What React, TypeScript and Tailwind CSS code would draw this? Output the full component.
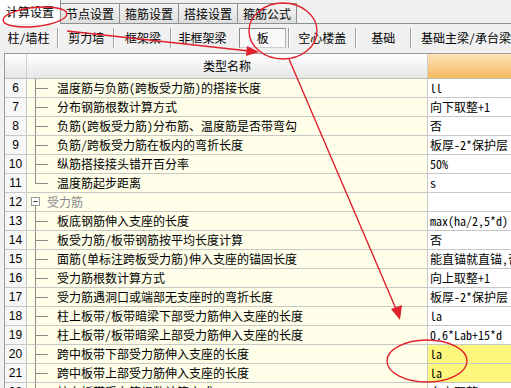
import React from 'react';

type Row = {
  n: number;
  name: string;
  value?: string;
  tree?: 'mid' | 'last' | 'group';
  hl?: boolean;
};

const rows: Row[] = [
  { n: 6, name: '温度筋与负筋(跨板受力筋)的搭接长度', value: 'll', tree: 'mid' },
  { n: 7, name: '分布钢筋根数计算方式', value: '向下取整+1', tree: 'mid' },
  { n: 8, name: '负筋(跨板受力筋)分布筋、温度筋是否带弯勾', value: '否', tree: 'mid' },
  { n: 9, name: '负筋/跨板受力筋在板内的弯折长度', value: '板厚-2*保护层', tree: 'mid' },
  { n: 10, name: '纵筋搭接接头错开百分率', value: '50%', tree: 'mid' },
  { n: 11, name: '温度筋起步距离', value: 's', tree: 'last' },
  { n: 12, name: '受力筋', tree: 'group' },
  { n: 13, name: '板底钢筋伸入支座的长度', value: 'max(ha/2,5*d)', tree: 'mid' },
  { n: 14, name: '板受力筋/板带钢筋按平均长度计算', value: '否', tree: 'mid' },
  { n: 15, name: '面筋(单标注跨板受力筋)伸入支座的锚固长度', value: '能直锚就直锚,否则按公式计算', tree: 'mid' },
  { n: 16, name: '受力筋根数计算方式', value: '向上取整+1', tree: 'mid' },
  { n: 17, name: '受力筋遇洞口或端部无支座时的弯折长度', value: '板厚-2*保护层', tree: 'mid' },
  { n: 18, name: '柱上板带/板带暗梁下部受力筋伸入支座的长度', value: 'la', tree: 'mid' },
  { n: 19, name: '柱上板带/板带暗梁上部受力筋伸入支座的长度', value: '0.6*Lab+15*d', tree: 'mid' },
  { n: 20, name: '跨中板带下部受力筋伸入支座的长度', value: 'la', tree: 'mid', hl: true },
  { n: 21, name: '跨中板带上部受力筋伸入支座的长度', value: 'la', tree: 'mid', hl: true },
  { n: 22, name: '柱上板带受力筋根数计算方式', value: '向上取整+1', tree: 'mid' },
];

const tabs = ['计算设置', '节点设置', '箍筋设置', '搭接设置', '箍筋公式'];

const Sep = () => (
  <div className="w-[2px] h-[20px] shrink-0 border-l border-[#a0a0a0] border-r border-r-white" />
);

const TreeLine = ({ kind }: { kind: 'mid' | 'last' }) => (
  <svg width="22" height="18" className="shrink-0">
    <line x1="8.5" y1="0" x2="8.5" y2={kind === 'last' ? 9.5 : 18} stroke="#8c8c8c" />
    <line x1="8.5" y1="9.5" x2="21" y2="9.5" stroke="#8c8c8c" />
  </svg>
);

const GroupBox = () => (
  <svg width="20" height="18" className="shrink-0">
    <rect x="4.5" y="4.5" width="8" height="8" fill="#fff" stroke="#9a9a9a" />
    <line x1="6.5" y1="8.5" x2="10.5" y2="8.5" stroke="#333" />
    <line x1="8.5" y1="13" x2="8.5" y2="18" stroke="#8c8c8c" />
  </svg>
);

export default function App() {
  return (
    <div
      className="relative w-[511px] h-[388px] overflow-hidden bg-[#f0f0f0] text-[12px] text-black"
      style={{ fontFamily: '"Noto Sans Mono CJK SC", "Noto Sans CJK SC", "Liberation Mono", monospace' }}
    >
      {/* tabs */}
      <div className="flex items-end h-[24px] border-b border-[#8e8f8f]">
        {tabs.map((t, i) =>
          i === 0 ? (
            <div
              key={t}
              className="w-[61px] h-[24px] -mb-px bg-white border-r border-[#8e8f8f] flex items-center justify-center leading-none"
            >
              {t}
            </div>
          ) : (
            <div
              key={t}
              className="w-[59px] h-[20px] bg-gradient-to-b from-[#f4f4f4] to-[#dedede] border-t border-r border-[#8e8f8f] flex items-center justify-center leading-none"
            >
              {t}
            </div>
          )
        )}
      </div>

      {/* sub toolbar */}
      <div className="flex items-center h-[27px] whitespace-nowrap">
        <div className="w-[60px] text-center">柱/墙柱</div>
        <Sep />
        <div className="w-[57px] text-center">剪力墙</div>
        <Sep />
        <div className="w-[58px] text-center">框架梁</div>
        <Sep />
        <div className="w-[63px] text-center">非框架梁</div>
        <div className="ml-[7px] w-[49px] h-[20px] border border-[#8a8a8a] border-b-[#d0d0d0] border-r-[#b0b0b0] bg-[#f9f9f9] flex items-center justify-center">
          板
        </div>
        <div className="w-[2px]" />
        <Sep />
        <div className="w-[68px] text-center">空心楼盖</div>
        <Sep />
        <div className="w-[56px] text-center">基础</div>
        <Sep />
        <div className="pl-[9px]">基础主梁/承台梁</div>
      </div>

      {/* grid */}
      <div className="mt-[2px] ml-[4px] w-max border-t border-l border-[#9a9a9a] bg-white">
        <div className="flex h-[25px] border-b border-[#bdbdbd]">
          <div className="w-[22px] border-r border-[#cfcfcf] bg-gradient-to-b from-white to-[#e6e6e6]" />
          <div className="w-[401px] border-r border-[#cfcfcf] bg-gradient-to-b from-white to-[#e6e6e6] flex items-center justify-center">
            类型名称
          </div>
          <div className="w-[200px] bg-gradient-to-b from-[#fde4b8] to-[#f6b95e]" />
        </div>
        {rows.map((r) => (
          <div key={r.n} className="flex h-[19px] border-b border-[#c8c8c8]">
            <div
              className="w-[22px] border-r border-[#c8c8c8] bg-[#f7f7f7] flex items-center justify-center"
              style={{ fontFamily: '"Liberation Sans", sans-serif' }}
            >
              {r.n}
            </div>
            <div className="w-[401px] border-r border-[#c8c8c8] bg-[#fefee9] flex items-center whitespace-nowrap overflow-hidden">
              {r.tree === 'group' ? (
                <>
                  <GroupBox />
                  <span className="text-[#8a8a8a]">{r.name}</span>
                </>
              ) : (
                <>
                  <TreeLine kind={r.tree === 'last' ? 'last' : 'mid'} />
                  <span className="ml-[8px]">{r.name}</span>
                </>
              )}
            </div>
            <div
              className={`w-[200px] pl-[2px] flex items-center whitespace-nowrap overflow-hidden ${
                r.hl ? 'bg-[#fdf77e]' : 'bg-white'
              }`}
            >
              {r.value}
            </div>
          </div>
        ))}
      </div>

      {/* red annotations */}
      <svg
        className="absolute inset-0 pointer-events-none"
        width="511"
        height="388"
        viewBox="0 0 511 388"
      >
        <g fill="none" stroke="#e2202c" strokeWidth="1.4">
          <ellipse cx="35" cy="17" rx="32" ry="9.5" transform="rotate(-6 35 17)" />
          <ellipse cx="283" cy="31" rx="34" ry="28" />
          <ellipse cx="427" cy="361" rx="40" ry="21" />
          <line x1="67" y1="31" x2="249" y2="51" />
          <line x1="289" y1="59" x2="396" y2="309" />
        </g>
        <polygon points="259,52 247,46 246,56" fill="#e2202c" />
        <polygon points="400,320 391,309 402,305" fill="#e2202c" />
      </svg>
    </div>
  );
}
